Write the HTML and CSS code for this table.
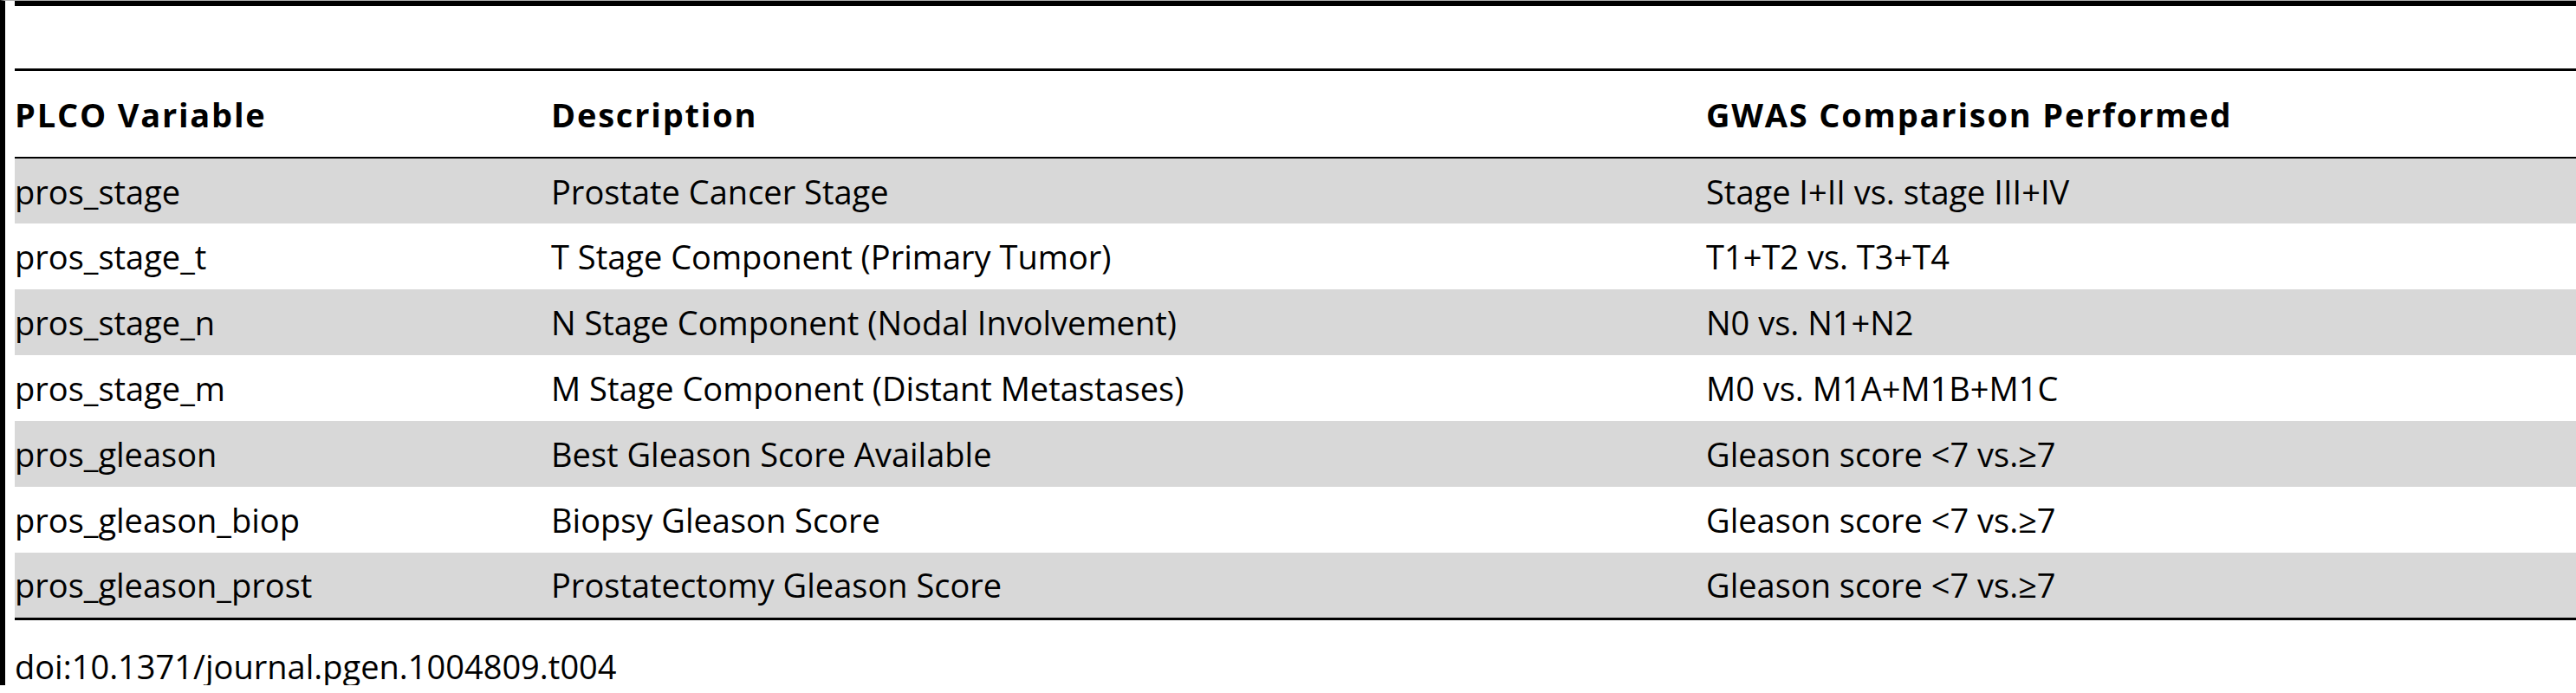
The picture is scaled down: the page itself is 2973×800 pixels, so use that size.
FILE: index.html
```html
<!DOCTYPE html>
<html>
<head>
<meta charset="utf-8">
<link rel="stylesheet" href="styles.css">
</head>
<body>
<div class="fig">
  <div class="caption-space"></div>
  <table class="tbl">
    <colgroup>
      <col class="c1">
      <col class="c2">
      <col class="c3">
    </colgroup>
    <thead>
      <tr><th>PLCO Variable</th><th>Description</th><th>GWAS Comparison Performed</th></tr>
    </thead>
    <tbody>
      <tr class="alt"><td>pros_stage</td><td>Prostate Cancer Stage</td><td>Stage I+II vs. stage III+IV</td></tr>
      <tr><td>pros_stage_t</td><td>T Stage Component (Primary Tumor)</td><td>T1+T2 vs. T3+T4</td></tr>
      <tr class="alt"><td>pros_stage_n</td><td>N Stage Component (Nodal Involvement)</td><td>N0 vs. N1+N2</td></tr>
      <tr><td>pros_stage_m</td><td>M Stage Component (Distant Metastases)</td><td>M0 vs. M1A+M1B+M1C</td></tr>
      <tr class="alt"><td>pros_gleason</td><td>Best Gleason Score Available</td><td>Gleason score &lt;7 vs.≥7</td></tr>
      <tr><td>pros_gleason_biop</td><td>Biopsy Gleason Score</td><td>Gleason score &lt;7 vs.≥7</td></tr>
      <tr class="alt"><td>pros_gleason_prost</td><td>Prostatectomy Gleason Score</td><td>Gleason score &lt;7 vs.≥7</td></tr>
    </tbody>
  </table>
  <div class="doi">doi:10.1371/journal.pgen.1004809.t004</div>
</div>
</body>
</html>
```
FILE: styles.css
```css
html, body {
  margin: 0;
  padding: 0;
  background: #ffffff;
}
body {
  font-family: "Open Sans", "Liberation Sans", sans-serif;
  color: #000;
  font-size: 38px;
}
.fig {
  border-left: 6px solid #000;
  margin-left: 0;
  padding-left: 11px;
  height: 791px;
  box-sizing: border-box;
  border-top: 1px solid #b0b0b0;
}
.caption-space {
  border-top: 6px solid #000;
  height: 72px;
}
.tbl {
  width: 100%;
  border-collapse: collapse;
  table-layout: fixed;
  border-top: 3px solid #000;
  border-bottom: 3px solid #000;
}
.c1 { width: 619px; }
.c2 { width: 1333px; }
.tbl th {
  text-align: left;
  font-weight: 700;
  letter-spacing: 1.8px;
  height: 99px;
  padding: 0;
  vertical-align: middle;
  border-bottom: 2px solid #000;
  white-space: nowrap;
}
.tbl td {
  height: 76px;
  padding: 0;
  vertical-align: middle;
  white-space: nowrap;
  box-sizing: border-box;
}
.tbl tr.alt td {
  background: #d8d8d8;
}
.doi {
  margin-top: 35px;
  padding-left: 0;
  line-height: 37px;
}
```
